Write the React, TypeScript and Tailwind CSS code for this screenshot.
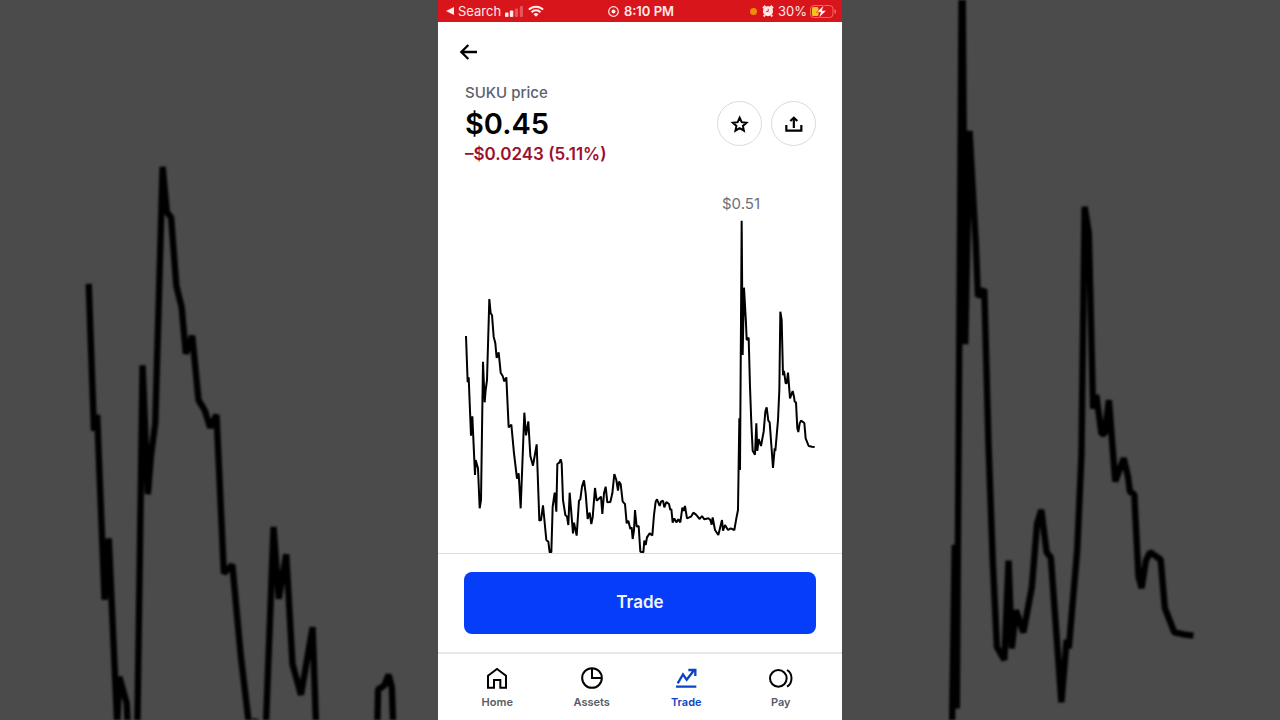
import React from 'react';

// Price line, three units to a pixel at phone width
const PRICE_POINTS = [
  '83,438 88,577 91,562 98,737 102,679 110,855 112,810 119,835 124,955 128,930 134,515 139,637 142,600 146,570',
  '153,327 157,370 161,375 166,440 171,460 175,504 181,487 187,548 193,558 198,574 204,562 211,712 219,704',
  '227,790 236,866 241,850 247,955 258,668 263,736 270,694 276,798 284,827 289,798 295,763 303,992 308,990',
  '314,946 324,1050 330,1055 334,1087 339,1087 343,950 349,908 354,965 357,822 363,818 367,808 370,820 374,930',
  '381,975 386,980 390,1005 394,908 404,1030 407,998 415,1037 422,932 426,928 431,890 437,871 442,910 448,987',
  '454,968 459,1002 463,982 470,894 475,932 488,920 492,972 497,910 502,890 507,937 516,936 522,910 528,852',
  '534,870 539,902 542,875 547,882 553,935 560,942 565,1000 570,992 576,1017 580,1012 583,1047 587,1020',
  '590,960 595,1010 601,1008 606,1085 615,1087 618,1052 622,1065 626,1042 634,1030 642,1036 647,975 652,935',
  '656,928 664,948 668,935 674,932 678,952 684,936 692,942 696,960 699,957 703,998 708,985 714,997 720,988',
  '726,997 732,953 736,963 740,948 746,985 758,980 765,968 773,974 784,987 791,978 798,988 811,985 816,990',
  '820,1004 823,982 830,1020 840,1035 846,1010 851,990 854,1022 860,1005 869,1020 877,1015 888,1020 894,985',
  '899,960 903,685 905,840 910,92 913,495 917,293 923,400 925,450 931,443 935,590 939,700 943,782 950,794',
  '954,700 957,783 961,747 968,768 976,725 981,665 985,652 990,692 994,697 999,765 1004,834 1009,775',
  '1011,783 1019,690 1023,600 1026,365 1030,390 1034,556 1037,543 1042,580 1045,580 1049,548 1055,625',
  '1063,603 1067,620 1069,635 1073,637 1077,715 1080,726 1084,700 1088,692 1098,699 1102,745 1111,768',
  '1121,770 1129,771',
].join(' ');

const PriceLine = () => (
  <polyline points={PRICE_POINTS} fill="none" stroke="#000" strokeWidth="6" strokeLinejoin="bevel" />
);

const StatusBar = () => (
  <div className="grid h-[22px] grid-cols-3 items-center bg-[#d9151c] pr-[6px] pl-2 text-[13px] leading-[22px] text-[#ffe9e6]">
    <div className="flex items-center">
      <svg className="mr-1 h-2 w-2" viewBox="0 0 8 8" fill="currentColor">
        <path d="M8 0v8L0 4z" />
      </svg>
      <span>Search</span>
      <svg className="ml-1 h-[11px] w-[18px]" viewBox="0 0 18 11" fill="currentColor">
        <rect x="0" y="6.500" width="3.500" height="4.500" rx="1" />
        <rect x="4.800" y="4.500" width="3.500" height="6.500" rx="1" />
        <rect x="9.800" y="2.500" width="3.200" height="8.500" rx="1" opacity="0.3" />
        <rect x="14.800" y="0" width="3.200" height="11" rx="1" opacity="0.3" />
      </svg>
      <svg className="ml-[5px] h-3 w-4" viewBox="0 0 16 12" fill="none" stroke="currentColor" strokeWidth="2">
        <path d="M0.9 4.6a10 10 0 0 1 14.2 0" />
        <path d="M3.5 7.2a6.4 6.4 0 0 1 9 0" />
        <path d="M8 11.8L5.5 9.2a3.6 3.6 0 0 1 5 0z" fill="currentColor" stroke="none" />
      </svg>
    </div>
    <div className="flex items-center justify-center gap-[5px] font-semibold">
      <svg className="h-[11px] w-[11px]" viewBox="0 0 11 11" fill="none" stroke="currentColor">
        <circle cx="5.5" cy="5.5" r="4.8" strokeWidth="1.2" />
        <circle cx="5.5" cy="5.5" r="2" fill="currentColor" stroke="none" />
      </svg>
      <span>8:10 PM</span>
    </div>
    <div className="flex items-center justify-end">
      <span className="mr-[5px] h-[7px] w-[7px] rounded-full bg-[#f08a0c]" />
      <svg className="mr-1 h-3 w-3" viewBox="0 0 12 12">
        <path d="M1 3.2L3.4 0.8M11 3.2L8.6 0.8M2.8 10L1.8 11.5M9.2 10l1 1.5" stroke="#ffe9e6" strokeWidth="2" />
        <circle cx="6" cy="6.2" r="5" fill="#ffe9e6" />
        <path d="M6.2 3.8v2.700H4.200" fill="none" stroke="#d9151c" strokeWidth="0.9" />
      </svg>
      <span>30%</span>
      <svg className="ml-[3px] h-[13px] w-[26px]" viewBox="0 0 26 13">
        <rect x="0.5" y="0.5" width="22.5" height="12" rx="3.5" fill="none" stroke="#f06a62" />
        <path d="M24.5 4.5v4a2 2 0 0 0 0-4z" fill="#f06a62" />
        <rect x="2" y="2" width="6.5" height="9" rx="1.5" fill="#f6c21c" />
        <path d="M14 0L6.5 7.2h4.2L8.6 13 16.4 5.6h-4.3z" fill="#fff" stroke="#d9151c" strokeWidth="0.6" />
      </svg>
    </div>
  </div>
);

const roundButton = 'flex h-[45px] w-[45px] items-center justify-center rounded-full border border-[#d9dbde]';

const PriceHeader = () => (
  <div className="flex items-center justify-between pr-[26px] pl-[27px]">
    <div>
      <p className="text-[15px] leading-5 font-medium text-[#5b616e]">SUKU price</p>
      <h1 className="text-[29px] leading-[41px] font-semibold text-black">$0.45</h1>
      <p className="text-[17px] leading-5 font-semibold text-[#9b1030]">–$0.0243 (5.11%)</p>
    </div>
    <div className="flex gap-[9px]">
      <button type="button" aria-label="Add to watchlist" className={roundButton}>
        <svg className="h-5 w-5" viewBox="0 0 60 60" fill="none" stroke="#000" strokeWidth="6">
          <path d="M29 11l6 13.500 14.500 1.500-10.800 9.800 3 14.200L29 42.700 16.300 50l3-14.200L8.500 26 23 24.500z" />
        </svg>
      </button>
      <button type="button" aria-label="Share" className={roundButton}>
        <svg className="h-5 w-5" viewBox="0 0 60 60" fill="none" stroke="#000" strokeWidth="6.5">
          <path d="M7 33v17h45V33M29.500 42V11M19 21l10.500-10L40 21" />
        </svg>
      </button>
    </div>
  </div>
);

const PriceChart = () => (
  <div className="relative mt-[26px]">
    <span className="absolute top-1 left-3/4 -translate-x-1/2 text-[15px] leading-5 text-[#6b7078]">$0.51</span>
    <svg className="block w-full" viewBox="-1 0 1212 1089" role="img" aria-label="SUKU price chart">
      <PriceLine />
    </svg>
  </div>
);

const tabs = [
  {
    name: 'Home',
    icon: <path d="M9 65V29L36 9l27 20v36H46V42H27v23z" />,
  },
  {
    name: 'Assets',
    icon: <path d="M65.500 36a29.500 29.500 0 1 1-59 0 29.500 29.500 0 0 1 59 0zM36 6.500V36h29.500" />,
  },
  {
    name: 'Trade',
    active: true,
    icon: <path d="M6 62h61M11 52l16-27 11 16 22-28M43 12h21v18" strokeWidth="7" />,
  },
  {
    name: 'Pay',
    icon: <path d="M53 37a25 25 0 1 1-50 0 25 25 0 0 1 50 0zM54 12c18 10 18 40 0 50" />,
  },
];

const TabBar = () => (
  <nav className="border-t-2 border-[#e6e7e9] pt-3 pr-3.5 pb-2.5 pl-3">
    <ul className="grid grid-cols-4">
      {tabs.map((tab) => (
        <li key={tab.name}>
          <a
            href="#"
            className={`flex flex-col items-center gap-1 text-[11px] leading-4 font-semibold ${
              tab.active ? 'text-[#0b45c4]' : 'text-[#565b66]'
            }`}
          >
            <svg
              className="h-6 w-6 overflow-visible"
              viewBox="0 0 72 72"
              fill="none"
              stroke={tab.active ? '#0b45c4' : '#000'}
              strokeWidth="6"
            >
              {tab.icon}
            </svg>
            {tab.name}
          </a>
        </li>
      ))}
    </ul>
  </nav>
);

const App = () => {
  return (
    <div className="relative flex min-h-screen justify-center overflow-hidden bg-[#4b4b4b] font-['Inter',sans-serif]">
      {/* enlarged chart behind the phone */}
      <svg
        className="absolute inset-0 h-full w-full blur-[1px]"
        viewBox="-1 169 1212 682"
        preserveAspectRatio="xMidYMid slice"
        aria-hidden="true"
      >
        <PriceLine />
      </svg>

      <main className="relative flex w-full max-w-[404px] flex-col bg-white">
        <StatusBar />
        <header className="px-5 pt-[18px] pb-[19px]">
          <button type="button" aria-label="Back" className="flex h-6 w-6 items-center">
            <svg className="h-5 w-5" viewBox="0 0 60 60" fill="none" stroke="#000" strokeWidth="7">
              <path d="M57 30H10M31 9L10 30l21 21" />
            </svg>
          </button>
        </header>
        <PriceHeader />
        <PriceChart />
        <div className="mt-auto border-t border-[#dcdee1] px-[26px] pt-[18px] pb-[18px]">
          <button type="button" className="h-[62px] w-full rounded-lg bg-[#053df8] text-[17px] font-semibold text-[#eef5ff]">
            Trade
          </button>
        </div>
        <TabBar />
      </main>
    </div>
  );
};

export default App;
